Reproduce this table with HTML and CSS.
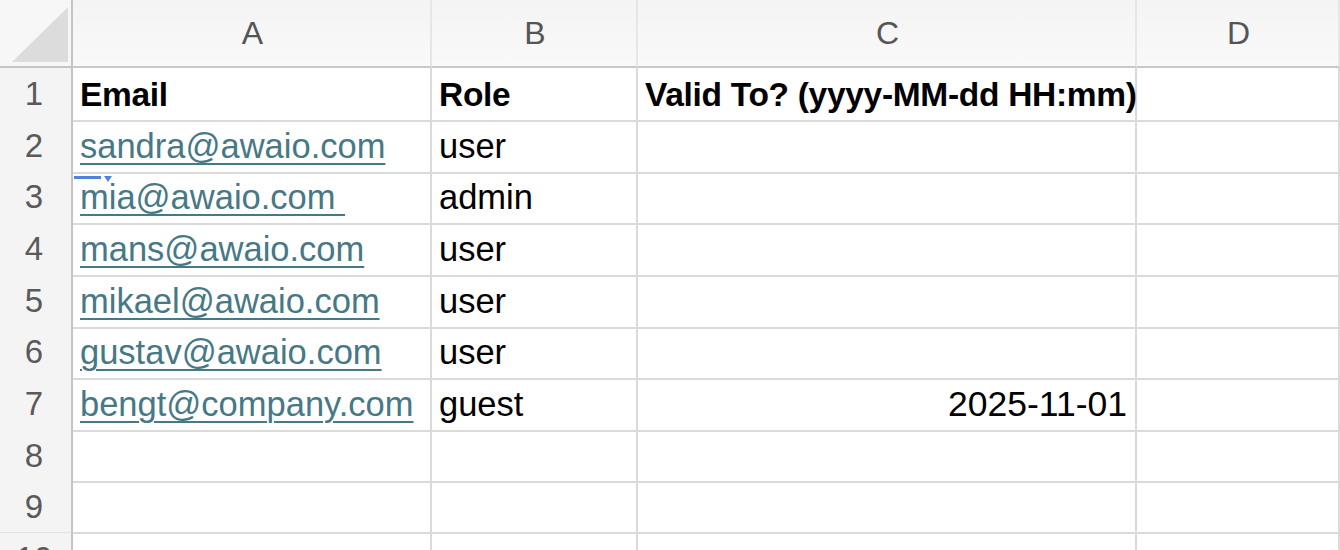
FILE: index.html
```html
<!DOCTYPE html>
<html lang="en">
<head>
  <meta charset="UTF-8">
  <title>Users</title>
  <link rel="stylesheet" href="styles.css">
</head>
<body>
  <div class="sheet">
    <div class="row head">
      <div class="corner"><span class="tri"></span></div>
      <div class="col">A</div>
      <div class="col">B</div>
      <div class="col">C</div>
      <div class="col">D</div>
    </div>
    <div class="row">
      <div class="num">1</div>
      <div class="cell bold">Email</div>
      <div class="cell bold">Role</div>
      <div class="cell bold">Valid To? (yyyy-MM-dd HH:mm)</div>
      <div class="cell"></div>
    </div>
    <div class="row">
      <div class="num">2</div>
      <div class="cell"><a class="link" href="#">sandra@awaio.com</a></div>
      <div class="cell">user</div>
      <div class="cell"></div>
      <div class="cell"></div>
    </div>
    <div class="row">
      <div class="num">3</div>
      <div class="cell"><span class="mark"></span><span class="mark-tip"></span><a class="link" href="#">mia@awaio.com&nbsp;</a></div>
      <div class="cell">admin</div>
      <div class="cell"></div>
      <div class="cell"></div>
    </div>
    <div class="row">
      <div class="num">4</div>
      <div class="cell"><a class="link" href="#">mans@awaio.com</a></div>
      <div class="cell">user</div>
      <div class="cell"></div>
      <div class="cell"></div>
    </div>
    <div class="row">
      <div class="num">5</div>
      <div class="cell"><a class="link" href="#">mikael@awaio.com</a></div>
      <div class="cell">user</div>
      <div class="cell"></div>
      <div class="cell"></div>
    </div>
    <div class="row">
      <div class="num">6</div>
      <div class="cell"><a class="link" href="#">gustav@awaio.com</a></div>
      <div class="cell">user</div>
      <div class="cell"></div>
      <div class="cell"></div>
    </div>
    <div class="row">
      <div class="num">7</div>
      <div class="cell"><a class="link" href="#">bengt@company.com</a></div>
      <div class="cell">guest</div>
      <div class="cell right">2025-11-01</div>
      <div class="cell"></div>
    </div>
    <div class="row">
      <div class="num">8</div>
      <div class="cell"></div>
      <div class="cell"></div>
      <div class="cell"></div>
      <div class="cell"></div>
    </div>
    <div class="row">
      <div class="num">9</div>
      <div class="cell"></div>
      <div class="cell"></div>
      <div class="cell"></div>
      <div class="cell"></div>
    </div>
    <div class="row">
      <div class="num">10</div>
      <div class="cell"></div>
      <div class="cell"></div>
      <div class="cell"></div>
      <div class="cell"></div>
    </div>
  </div>
</body>
</html>
```

FILE: styles.css
```css
body{
  margin: 0;
  padding: 0;
  background: #fff;
  font-family: "Liberation Sans", Arial, sans-serif;
  overflow: hidden;
}
.sheet{
  width: 1340px;
  height: 550px;
  overflow: hidden;
}
.row{
  display: grid;
  grid-template-columns: 73px 359px 206px 499px 203px;
  height: 51.67px;
}
.row.head{
  height: 68px;
}
.corner{
  position: relative;
  background: #f7f7f7;
  border-right: 2px solid #c4c4c4;
  border-bottom: 2px solid #c4c4c4;
}
.tri{
  position: absolute;
  left: 12px;
  top: 7px;
  width: 56px;
  height: 55px;
  background: #dcdcdc;
  clip-path: polygon(100% 0, 100% 100%, 0 100%);
}
.col{
  display: flex;
  align-items: center;
  justify-content: center;
  background: linear-gradient(#f4f4f4, #f9f9f9);
  border-right: 2px solid #e6e6e6;
  border-bottom: 2px solid #c8c8c8;
  color: #555;
  font-size: 32px;
  padding-top: 1px;
  padding-left: 2px;
}
.num{
  background: #f4f4f4;
  border-right: 2px solid #c4c4c4;
  border-bottom: 2px solid #e2e2e2;
  color: #5a5a5a;
  font-size: 33px;
  line-height: 51px;
  text-align: center;
  padding-right: 3px;
}
.cell{
  position: relative;
  border-right: 2px solid #dadada;
  border-bottom: 2px solid #dadada;
  font-size: 34.5px;
  line-height: 51px;
  padding: 1px 7px 0;
  color: #000;
  white-space: nowrap;
}
.cell.bold{
  font-size: 33.5px;
  font-weight: bold;
  letter-spacing: -0.3px;
  padding-top: 1px;
  overflow: visible;
}
.cell.right{
  text-align: right;
  padding-right: 8px;
  font-size: 35.5px;
}
.link{
  color: #467886;
  text-decoration: underline;
  text-decoration-thickness: 2px;
  text-underline-offset: 5px;
}
.mark{
  position: absolute;
  left: 1px;
  top: 5px;
  width: 27px;
  height: 3px;
  background: #4f84dc;
}
.mark-tip{
  position: absolute;
  left: 31px;
  top: 5px;
  width: 0;
  height: 0;
  border-left: 4px solid transparent;
  border-right: 4px solid transparent;
  border-top: 6px solid #4f84dc;
}
```
